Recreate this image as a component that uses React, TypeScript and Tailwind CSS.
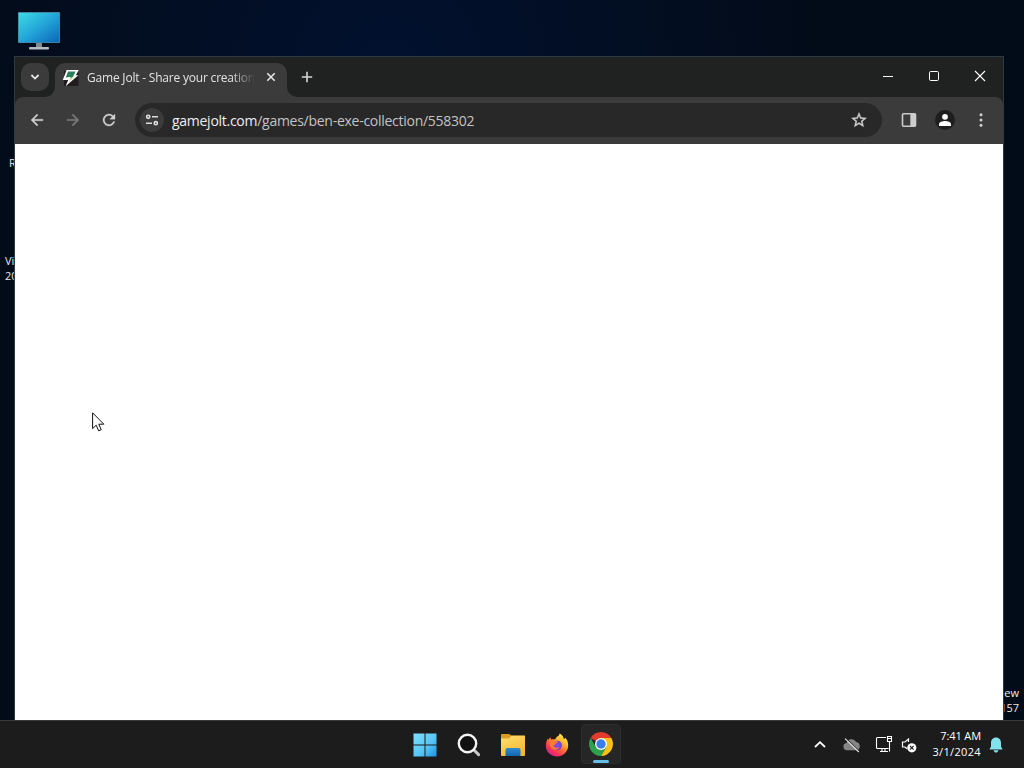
import React from "react";

const font = "font-['Open_Sans','Noto_Sans',sans-serif]";

function Slot({ w, children }: { w: string; children: React.ReactNode }) {
  return <div className={`flex h-full shrink-0 items-center justify-center ${w}`}>{children}</div>;
}

function Monitor() {
  return (
    <svg width="44" height="40" viewBox="0 0 44 40">
      <defs>
        <linearGradient id="screen" x1="0" y1="0" x2="1" y2="1">
          <stop offset="0" stopColor="#3edbe4" />
          <stop offset="0.5" stopColor="#23a5d9" />
          <stop offset="1" stopColor="#0b66b8" />
        </linearGradient>
      </defs>
      <rect x="1" y="0" width="42" height="31" rx="0.8" fill="#3f87a3" />
      <rect x="1.8" y="1" width="40.4" height="29.2" fill="url(#screen)" />
      <rect x="19" y="31" width="6" height="4.5" fill="#7f8b93" />
      <rect x="12" y="35" width="20" height="2.4" rx="1" fill="#b3bbc0" />
    </svg>
  );
}

function Favicon() {
  return (
    <svg width="18" height="18" viewBox="0 0 18 18">
      <rect x="2" y="2" width="14.5" height="15" fill="#231c1e" />
      <path d="M4.6 1 H16.8 L13.8 6.2 H16.4 L3.6 17.2 L6.2 11 H0.8 Z" fill="#fff" />
      <path d="M6 2.4 H13.6 L11.2 7.4 L9.6 9 L7.6 8 L3.8 8.6 Z" fill="#2b7f5c" />
      <path d="M7.4 9.4 L12 8 L7 13 L8 10.4 Z" fill="#b9e889" />
    </svg>
  );
}

function TabStrip() {
  return (
    <div className="flex h-10 shrink-0 items-start bg-[#202221]">
      <div className="ml-[6px] mt-[6px] flex h-7 w-7 shrink-0 items-center justify-center rounded-[10px] bg-[#3b3b3b]">
        <svg width="10" height="10" viewBox="0 0 10 10" fill="none" stroke="#e6e6e6" strokeWidth="1.8">
          <path d="M1.4 3 L5 6.6 L8.6 3" />
        </svg>
      </div>
      <svg className="ml-[-4px] shrink-0 self-end" width="10" height="10" viewBox="0 0 10 10">
        <path d="M10 0 V10 H0 A10 10 0 0 0 10 0 Z" fill="#3b3b3b" />
      </svg>
      <div className="mt-[6px] flex h-[34px] w-[232px] shrink-0 items-center rounded-t-[10px] bg-[#3b3b3b] pb-[6px]">
        <div className="ml-[7px] mt-px"><Favicon /></div>
        <div className="ml-[7px] w-[168px] overflow-hidden whitespace-nowrap text-[12px] tracking-[-0.2px] text-[#e3e3e3] [mask-image:linear-gradient(to_right,#000_86%,transparent_100%)]">
          Game Jolt - Share your creation
        </div>
        <svg className="ml-[11px]" width="10" height="10" viewBox="0 0 10 10" stroke="#e6e6e6" strokeWidth="1.6">
          <path d="M1.3 1.3 L8.7 8.7 M8.7 1.3 L1.3 8.7" />
        </svg>
      </div>
      <svg className="shrink-0 self-end" width="10" height="10" viewBox="0 0 10 10">
        <path d="M0 0 V10 H10 A10 10 0 0 1 0 0 Z" fill="#3b3b3b" />
      </svg>
      <svg className="ml-[4px] mt-[14px]" width="12" height="12" viewBox="0 0 12 12" stroke="#d6d6d6" strokeWidth="1.6">
        <path d="M6 0.8 V11.2 M0.8 6 H11.2" />
      </svg>
      <div className="ml-auto flex h-[38px] text-white">
        <Slot w="w-[46px]"><svg width="12" height="12" viewBox="0 0 12 12" stroke="currentColor"><path d="M1 6.5 H11" /></svg></Slot>
        <Slot w="w-[46px]"><svg width="12" height="12" viewBox="0 0 12 12" fill="none" stroke="currentColor"><rect x="1.5" y="1.5" width="9" height="9" rx="1.2" /></svg></Slot>
        <Slot w="w-[46px]"><svg width="12" height="12" viewBox="0 0 12 12" stroke="currentColor" strokeWidth="1.1"><path d="M1 1 L11 11 M11 1 L1 11" /></svg></Slot>
      </div>
    </div>
  );
}

function Toolbar() {
  const back = "M20 11H7.83l5.59-5.59L12 4l-8 8 8 8 1.41-1.41L7.83 13H20v-2z";
  return (
    <div className="bg-[#202221]">
      <div className="flex h-[47px] items-center rounded-t-[8px] bg-[#3b3b3b] pb-px pl-1">
        <Slot w="w-9"><svg width="18" height="18" viewBox="0 0 24 24" fill="#d0d0d0" stroke="#d0d0d0" strokeWidth="0.4"><path d={back} /></svg></Slot>
        <Slot w="w-9"><svg className="rotate-180" width="18" height="18" viewBox="0 0 24 24" fill="#7b7b7b" stroke="#7b7b7b" strokeWidth="0.4"><path d={back} /></svg></Slot>
        <Slot w="w-9">
          <svg width="18" height="18" viewBox="0 0 24 24" fill="#d0d0d0" stroke="#d0d0d0" strokeWidth="0.4">
            <path d="M17.65 6.35C16.2 4.9 14.21 4 12 4c-4.42 0-7.99 3.58-7.99 8s3.57 8 7.99 8c3.73 0 6.84-2.55 7.73-6h-2.08c-.82 2.33-3.04 4-5.65 4-3.31 0-6-2.69-6-6s2.69-6 6-6c1.66 0 3.14.69 4.22 1.78L13 11h7V4l-2.35 2.35z" />
          </svg>
        </Slot>
        <div className="ml-2 flex h-[34px] w-[747px] shrink-0 items-center rounded-full bg-[#282828] pl-[5px]">
          <div className="flex h-6 w-6 shrink-0 items-center justify-center rounded-full bg-[#3b3b3b]">
            <svg width="14" height="12" viewBox="0 0 14 12" fill="none" stroke="#dedede" strokeWidth="1.6">
              <circle cx="3.2" cy="2.8" r="1.6" /><path d="M7 2.8 H13 M1 9.2 H7" /><circle cx="10.8" cy="9.2" r="1.6" />
            </svg>
          </div>
          <div className="ml-2 whitespace-nowrap text-[14px] tracking-[-0.27px] text-[#c3c3c3]">
            <span className="text-[#eeeeee]">gamejolt.com</span>/games/ben-exe-collection/558302
          </div>
          <svg className="ml-auto mr-[14px]" width="18" height="18" viewBox="0 0 24 24" fill="#d0d0d0" stroke="#d0d0d0" strokeWidth="0.5">
            <path d="M22 9.24l-7.19-.62L12 2 9.19 8.63 2 9.24l5.46 4.73L5.82 21 12 17.27 18.18 21l-1.63-7.03L22 9.24zM12 15.4l-3.76 2.27 1-4.28-3.32-2.88 4.38-.38L12 6.1l1.71 4.04 4.38.38-3.32 2.88 1 4.28L12 15.4z" />
          </svg>
        </div>
        <div className="ml-auto flex h-full pr-1">
          <Slot w="w-9">
            <svg width="16" height="16" viewBox="0 0 16 16">
              <rect x="1.5" y="1.8" width="13" height="12.4" rx="1" fill="none" stroke="#cccccc" strokeWidth="1.6" />
              <rect x="9.3" y="1.8" width="5.4" height="12.4" fill="#cccccc" />
            </svg>
          </Slot>
          <Slot w="w-9">
            <div className="flex h-5 w-5 items-center justify-center rounded-full bg-[#1e1e1e]">
              <svg width="14" height="14" viewBox="0 0 14 14" fill="#ffffff">
                <circle cx="7" cy="3.8" r="2.9" /><path d="M1 13 V11.2 C1 8.9 4.6 8 7 8 S13 8.9 13 11.2 V13 Z" />
              </svg>
            </div>
          </Slot>
          <Slot w="w-9">
            <svg width="4" height="14" viewBox="0 0 4 14" fill="#d0d0d0"><circle cx="2" cy="1.8" r="1.5" /><circle cx="2" cy="7" r="1.5" /><circle cx="2" cy="12.2" r="1.5" /></svg>
          </Slot>
        </div>
      </div>
    </div>
  );
}

function StartIcon() {
  return (
    <svg width="24" height="24" viewBox="0 0 24 24">
      <defs>
        <linearGradient id="win" gradientUnits="userSpaceOnUse" x1="0" y1="0" x2="24" y2="24">
          <stop offset="0" stopColor="#83e0fb" /><stop offset="0.6" stopColor="#52c4f7" /><stop offset="1" stopColor="#1a8fe4" />
        </linearGradient>
      </defs>
      <path fill="url(#win)" d="M0.5 0.5 H11.5 V11.5 H0.5Z M12.5 0.5 H23.5 V11.5 H12.5Z M0.5 12.5 H11.5 V23.5 H0.5Z M12.5 12.5 H23.5 V23.5 H12.5Z" />
    </svg>
  );
}

function SearchIcon() {
  return (
    <svg width="24" height="24" viewBox="0 0 24 24" fill="none">
      <path d="M17 17 L21.6 21.6" stroke="#c8c8c8" strokeWidth="3" strokeLinecap="round" />
      <circle cx="10.5" cy="10.5" r="8.7" fill="#111" stroke="#f4f4f4" strokeWidth="2.4" />
    </svg>
  );
}

function FolderIcon() {
  return (
    <svg width="26" height="24" viewBox="0 0 26 24">
      <defs>
        <linearGradient id="fold" x1="0" y1="0" x2="0.6" y2="1"><stop stopColor="#ffdf76" /><stop offset="1" stopColor="#f3b92e" /></linearGradient>
        <linearGradient id="dock" x1="0" y1="0" x2="0" y2="1"><stop stopColor="#2c8bd5" /><stop offset="1" stopColor="#1266ae" /></linearGradient>
      </defs>
      <path d="M1 2 Q1 1 2 1 H9 L11.5 2.4 H24 Q25 2.4 25 3.4 V9 H1Z" fill="#d99c20" />
      <path d="M1 5.6 H9 L11.5 2.8 H25 V22 Q25 23 24 23 H2 Q1 23 1 22Z" fill="url(#fold)" />
      <path d="M5.5 23 V17 Q5.5 15 7.5 15 H18.5 Q20.5 15 20.5 17 V23Z" fill="url(#dock)" />
    </svg>
  );
}

function FirefoxIcon() {
  return (
    <svg width="24" height="24" viewBox="0 0 24 24">
      <defs>
        <linearGradient id="ffx" x1="0.85" y1="0.05" x2="0.2" y2="0.95">
          <stop stopColor="#fff24a" /><stop offset="0.3" stopColor="#ffb82e" /><stop offset="0.55" stopColor="#ff6a35" /><stop offset="0.8" stopColor="#f6315a" /><stop offset="1" stopColor="#d620a0" />
        </linearGradient>
        <radialGradient id="globe"><stop stopColor="#8a4af5" /><stop offset="1" stopColor="#6b42cc" /></radialGradient>
      </defs>
      <path d="M14.8 0.6 C18 2.5 18.6 5 18.8 6 C20 5.8 20.2 5.2 20 4.6 C22.2 6.8 23.4 9.7 23.2 12.8 C22.8 19 18 23.5 12 23.5 C5.6 23.5 0.8 18.8 0.8 12.6 C0.8 9.5 1.8 7 3 5.4 L3.3 7 C4 5.7 4.5 4.8 5.4 4.2 L6 6.6 C7.4 6 9 6.1 10 6.5 C10.8 4.6 12.4 3 13.6 3 C13.8 2.2 14.2 1.2 14.8 0.6Z" fill="url(#ffx)" />
      <circle cx="12.2" cy="12.4" r="4.7" fill="url(#globe)" />
      <path d="M3.8 8.4 C6 6.8 8.2 7 10 8.2 L13.2 8.6 C12.8 10 11.6 10.2 10.5 10.6 C10.6 12 9.4 12.2 8.6 12.8 C9 14.6 12 15.6 14.4 14 C13.2 17.8 7 17.6 5.4 13.8Z" fill="#ff7a35" />
    </svg>
  );
}

function ChromeIcon() {
  return (
    <svg width="24" height="24" viewBox="0 0 24 24">
      <path d="M12 12 L1.61 6 A12 12 0 0 1 22.39 6 Z" fill="#e23b2e" />
      <path d="M12 6 H22.39 A12 12 0 0 1 12 24 L17.2 15 Z" fill="#fbc116" />
      <path d="M1.61 6 L6.8 15 L12 18 L17.2 15 L12 24 A12 12 0 0 1 1.61 6 Z" fill="#2da14c" />
      <circle cx="12" cy="12" r="6" fill="#fff" />
      <circle cx="12" cy="12" r="4.7" fill="#3b7de9" />
    </svg>
  );
}

function Taskbar() {
  return (
    <div className="flex h-12 shrink-0 items-stretch border-t border-[#3a3a3a] bg-[#1c1c1c]">
      <div className="ml-[403px] flex">
        <Slot w="w-11"><StartIcon /></Slot>
        <Slot w="w-11"><SearchIcon /></Slot>
        <Slot w="w-11"><FolderIcon /></Slot>
        <Slot w="w-11"><FirefoxIcon /></Slot>
        <div className="ml-[2px] mt-[3px] flex h-10 w-10 flex-col items-center rounded-[4px] border border-[#2c2c2c] bg-[#262626]">
          <div className="mt-[7px]"><ChromeIcon /></div>
          <div className="mt-[4px] h-[3px] w-4 shrink-0 rounded-full bg-[#64bde9]" />
        </div>
      </div>
      <div className="ml-auto flex items-center text-white">
        <svg width="12" height="8" viewBox="0 0 12 8" fill="none" stroke="currentColor" strokeWidth="1.8"><path d="M1 6 L6 1.2 L11 6" /></svg>
        <svg className="ml-[17px]" width="18" height="16" viewBox="0 0 18 16">
          <path d="M4.5 13.2 A3.6 3.6 0 0 1 3.6 6 A5.2 5.2 0 0 1 13.2 5 A4.2 4.2 0 0 1 13.7 13.2Z" fill="#858585" />
          <path d="M3 1 L16.5 14.2" stroke="#2a2a2a" strokeWidth="1" /><path d="M2 1.6 L15.8 15" stroke="#e0e0e0" strokeWidth="1.1" />
        </svg>
        <svg className="ml-[14px] mb-px" width="18" height="18" viewBox="0 0 18 18" fill="none" stroke="currentColor" strokeWidth="1.1">
          <path d="M11 2.5 H2.5 Q1.5 2.5 1.5 3.5 V12.5 Q1.5 13.5 2.5 13.5 H13.5 M5 16.5 H13 M7 13.5 V16.5 M10 13.5 V16.5" />
          <path d="M12.5 1.5 H16.5 V6.5 H12.5Z M12.5 3.5 H16.5 M14.5 6.5 V16.5" />
        </svg>
        <svg className="ml-[8px]" width="16" height="16" viewBox="0 0 16 16" fill="none">
          <path d="M7.5 5 V2 L4 5 H1.5 V10 H4 L6 11.8" stroke="#fff" strokeWidth="1.2" />
          <circle cx="10.8" cy="10.8" r="4.6" fill="#fff" /><path d="M9 9 L12.6 12.6 M12.6 9 L9 12.6" stroke="#222" strokeWidth="1.1" />
        </svg>
        <div className="mb-[2px] ml-[12px] w-[52px] whitespace-nowrap text-right text-[11px] leading-4">
          <div className="tracking-[-0.1px]">7:41 AM</div><div className="tracking-[0.35px]">3/1/2024</div>
        </div>
        <svg className="ml-[8px] mr-[21px]" width="14" height="16" viewBox="0 0 14 16" fill="#83e3ec">
          <path d="M7 0.5 C3.8 0.5 2 3 2 5.6 V9.4 L0.4 12.4 H13.6 L12 9.4 V5.6 C12 3 10.2 0.5 7 0.5Z M4.6 13.2 H9.4 C9 15 8 15.5 7 15.5 S5 15 4.6 13.2Z" />
        </svg>
      </div>
    </div>
  );
}

export default function App() {
  return (
    <div className={`flex h-[768px] w-[1024px] flex-col overflow-hidden ${font}`}>
      <div className="relative flex-1 overflow-hidden bg-[#020b18] bg-[radial-gradient(ellipse_at_38%_10%,#02112f_0%,#020b18_48%)] text-[11px] leading-[15px] text-[#e8e8e8]">
        <div className="absolute left-[17px] top-[12px]"><Monitor /></div>
        <div className="absolute left-[9px] top-[155px]">R</div>
        <div className="absolute left-[5px] top-[253px]"><div>Vi</div><div>20</div></div>
        <div className="absolute right-[5px] top-[685px] text-right"><div>ew</div><div>157</div></div>
        <div className="absolute left-[14px] top-[56px] flex h-[664px] w-[990px] flex-col border-x border-t border-[#30393f]">
          <TabStrip />
          <Toolbar />
          <div className="flex-1 bg-white" />
        </div>
        <svg className="absolute left-[92px] top-[412px]" width="13" height="20" viewBox="0 0 13 20">
          <path d="M0.6 0.8 V16.6 L4.2 13.2 L6.7 18.8 L9.2 17.7 L6.8 12.2 H11.8 Z" fill="#fff" stroke="#111" strokeWidth="1" />
        </svg>
      </div>
      <Taskbar />
    </div>
  );
}
